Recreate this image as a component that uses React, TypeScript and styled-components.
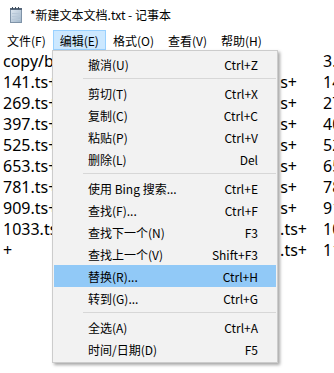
import React from 'react';
import styled, { createGlobalStyle } from 'styled-components';

const GlobalStyle = createGlobalStyle`
  html, body {
    margin: 0;
    padding: 0;
    background: #ffffff;
    overflow: hidden;
  }
`;

const uiFont = `"Noto Sans CJK SC", "Noto Sans", sans-serif`;

const Window = styled.div`
  width: 334px;
  height: 373px;
  background: #ffffff;
  display: flex;
  flex-direction: column;
  font-family: ${uiFont};
  color: #000;
  overflow: hidden;
`;

const TitleBar = styled.div`
  height: 30px;
  display: flex;
  align-items: center;
  padding-left: 9px;
  gap: 7px;
  flex: 0 0 auto;
`;

const Title = styled.span`
  font-size: 12px;
  line-height: 16px;
  white-space: nowrap;
`;

const MenuBar = styled.div`
  height: 20px;
  display: flex;
  align-items: stretch;
  flex: 0 0 auto;
`;

const MenuTitle = styled.div<{ $active?: boolean }>`
  box-sizing: border-box;
  display: flex;
  align-items: center;
  padding: 0 6px;
  font-size: 12px;
  white-space: nowrap;
  background: ${(p) => (p.$active ? '#cce8ff' : 'transparent')};
  border: 1px solid ${(p) => (p.$active ? '#99d1ff' : 'transparent')};
`;

const Editor = styled.div`
  position: relative;
  flex: 1;
  padding-top: 1px;
  font-family: "Noto Sans", "Open Sans", sans-serif;
  font-size: 16px;
`;

const Row = styled.div`
  height: 21px;
  line-height: 21px;
  display: flex;
  white-space: nowrap;
`;

const Head = styled.span`
  flex: 1;
  min-width: 0;
  overflow: hidden;
  padding-left: 3px;
`;

const Tail = styled.span<{ $gap: number }>`
  flex: 0 0 auto;
  margin-right: ${(p) => p.$gap}px;
`;

const Right = styled.span`
  flex: 0 0 11px;
  min-width: 0;
  overflow: visible;
`;

const DropMenu = styled.div`
  position: absolute;
  left: 52px;
  top: 0;
  width: 226px;
  box-sizing: border-box;
  background: #f2f2f2;
  border: 1px solid #cccccc;
  padding: 2px 0;
  box-shadow: 2px 2px 3px rgba(0, 0, 0, 0.35);
  font-family: ${uiFont};
  font-size: 12px;
`;

const Item = styled.div<{ $hover?: boolean }>`
  height: 22px;
  display: flex;
  align-items: center;
  justify-content: space-between;
  padding: 0 18px 0 34px;
  margin: 0 1px;
  background: ${(p) => (p.$hover ? '#91c9f7' : 'transparent')};
  white-space: nowrap;
`;

const Separator = styled.div`
  height: 1px;
  margin: 3px 1px 3px 30px;
  background: #d7d7d7;
`;

const NotepadIcon = () => (
  <svg width="14" height="16" viewBox="0 0 14 16">
    <defs>
      <linearGradient id="pg" x1="0" y1="0" x2="1" y2="1">
        <stop offset="0" stopColor="#dfe8f1" />
        <stop offset="1" stopColor="#9fb5c9" />
      </linearGradient>
    </defs>
    <rect x="1.5" y="2.5" width="11" height="13" fill="url(#pg)" stroke="#7f93a8" />
    <rect x="1" y="1" width="12" height="2" fill="#55667a" />
    <g stroke="#3d4b5a" strokeWidth="1">
      <line x1="3.5" y1="0" x2="3.5" y2="2" />
      <line x1="6.5" y1="0" x2="6.5" y2="2" />
      <line x1="9.5" y1="0" x2="9.5" y2="2" />
    </g>
    <g stroke="#b8c8d8" strokeWidth="1">
      <line x1="3" y1="6.5" x2="11" y2="6.5" />
      <line x1="3" y1="9.5" x2="11" y2="9.5" />
      <line x1="3" y1="12.5" x2="11" y2="12.5" />
    </g>
  </svg>
);

const menus = ['文件(F)', '编辑(E)', '格式(O)', '查看(V)', '帮助(H)'];

const lines = [
  { head: 'copy/b 0.ts+1.ts+2.ts', tail: '', right: '3.ts' },
  { head: '141.ts+142.ts+143.ts', tail: 's+', right: '142.' },
  { head: '269.ts+270.ts+271.ts', tail: 's+', right: '270.' },
  { head: '397.ts+398.ts+399.ts', tail: 's+', right: '400.' },
  { head: '525.ts+526.ts+527.ts', tail: 's+', right: '528.' },
  { head: '653.ts+654.ts+655.ts', tail: 's+', right: '656.' },
  { head: '781.ts+782.ts+783.ts', tail: 's+', right: '784.' },
  { head: '909.ts+910.ts+911.ts', tail: 's+', right: '912.' },
  { head: '1033.ts+1034.ts+1035', tail: '.ts+', right: '1040' },
  { head: '+', tail: '.ts+', right: '1168' },
];

type Entry = { label: string; key?: string; hover?: boolean } | 'sep';

const entries: Entry[] = [
  { label: '撤消(U)', key: 'Ctrl+Z' },
  'sep',
  { label: '剪切(T)', key: 'Ctrl+X' },
  { label: '复制(C)', key: 'Ctrl+C' },
  { label: '粘贴(P)', key: 'Ctrl+V' },
  { label: '删除(L)', key: 'Del' },
  'sep',
  { label: '使用 Bing 搜索...', key: 'Ctrl+E' },
  { label: '查找(F)...', key: 'Ctrl+F' },
  { label: '查找下一个(N)', key: 'F3' },
  { label: '查找上一个(V)', key: 'Shift+F3' },
  { label: '替换(R)...', key: 'Ctrl+H', hover: true },
  { label: '转到(G)...', key: 'Ctrl+G' },
  'sep',
  { label: '全选(A)', key: 'Ctrl+A' },
  { label: '时间/日期(D)', key: 'F5' },
];

export default function App() {
  return (
    <Window>
      <GlobalStyle />
      <TitleBar>
        <NotepadIcon />
        <Title>*新建文本文档.txt - 记事本</Title>
      </TitleBar>
      <MenuBar>
        {menus.map((m) => (
          <MenuTitle key={m} $active={m === '编辑(E)'}>
            {m}
          </MenuTitle>
        ))}
      </MenuBar>
      <Editor>
        {lines.map((l, i) => (
          <Row key={i}>
            <Head>{l.head}</Head>
            <Tail $gap={l.tail.length > 2 ? 16 : 26}>{l.tail}</Tail>
            <Right>{l.right}</Right>
          </Row>
        ))}
        <DropMenu>
          {entries.map((e, i) =>
            e === 'sep' ? (
              <Separator key={i} />
            ) : (
              <Item key={i} $hover={e.hover}>
                <span>{e.label}</span>
                <span>{e.key}</span>
              </Item>
            )
          )}
        </DropMenu>
      </Editor>
    </Window>
  );
}
